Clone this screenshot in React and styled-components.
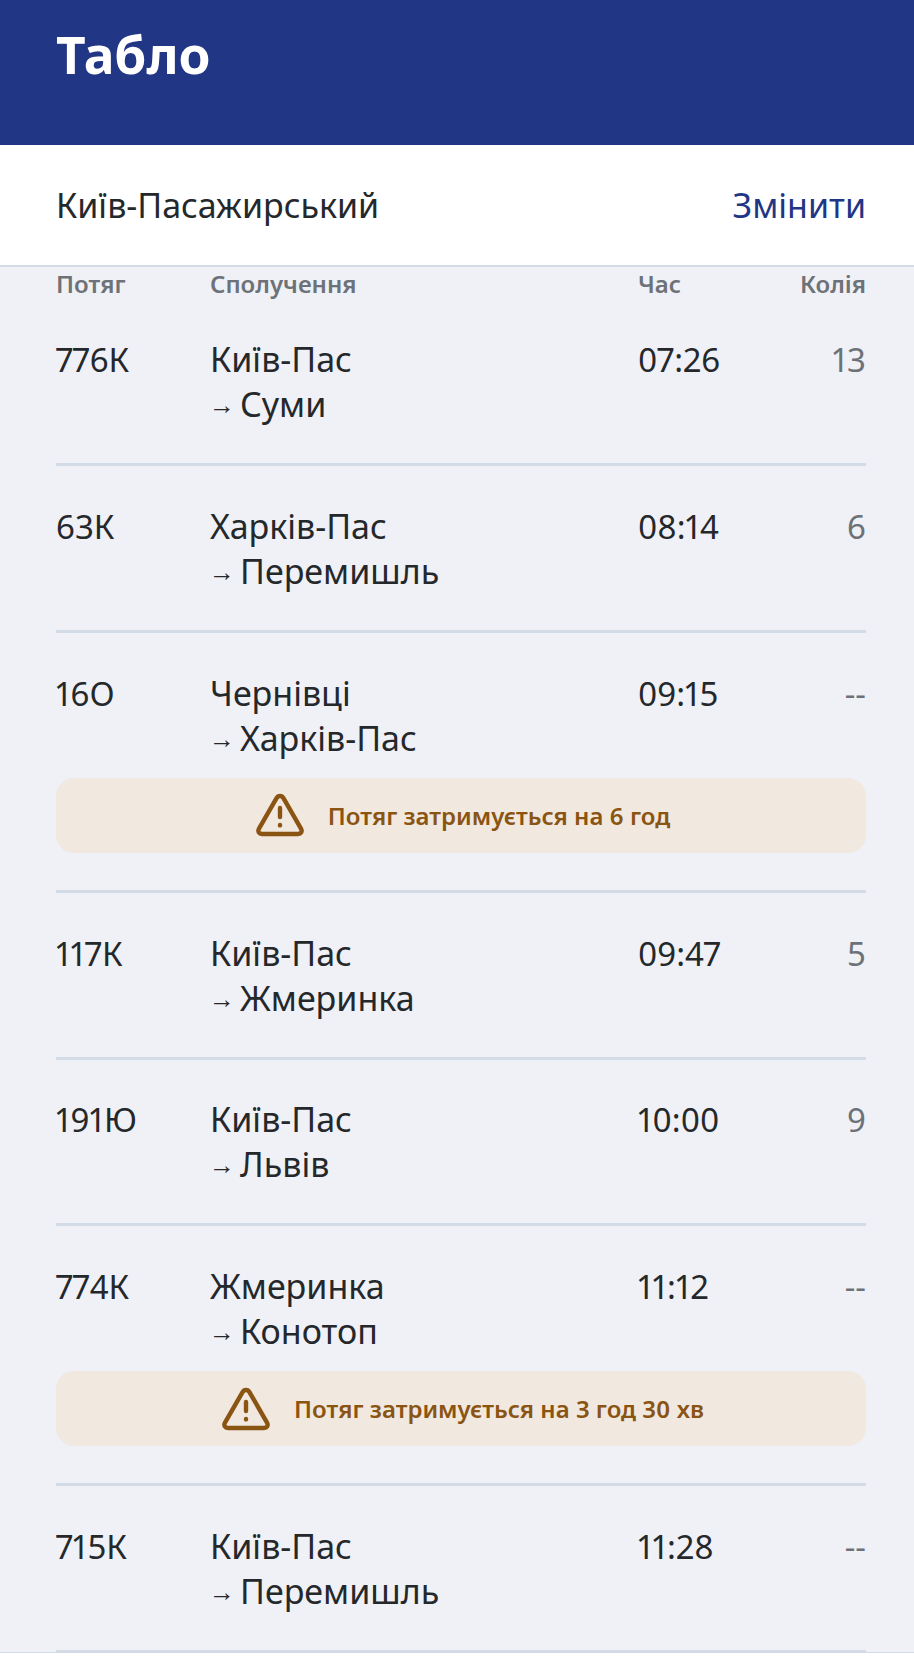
import React from "react";
import styled, { createGlobalStyle } from "styled-components";

const trains = [
  { id: "776К", from: "Київ-Пас", to: "Суми", time: "07:26", track: "13" },
  { id: "63К", from: "Харків-Пас", to: "Перемишль", time: "08:14", track: "6" },
  { id: "16О", from: "Чернівці", to: "Харків-Пас", time: "09:15", track: "--", delay: "Потяг затримується на 6 год" },
  { id: "117К", from: "Київ-Пас", to: "Жмеринка", time: "09:47", track: "5" },
  { id: "191Ю", from: "Київ-Пас", to: "Львів", time: "10:00", track: "9" },
  { id: "774К", from: "Жмеринка", to: "Конотоп", time: "11:12", track: "--", delay: "Потяг затримується на 3 год 30 хв" },
  { id: "715К", from: "Київ-Пас", to: "Перемишль", time: "11:28", track: "--" },
];

const WarningIcon = () => (
  <svg width="48" height="44" viewBox="0 0 48 44" fill="none" stroke="#8a5412" strokeWidth="4.4" strokeLinejoin="round" strokeLinecap="round">
    <path d="M24 3 C25.6 3 26.8 3.9 27.6 5.3 L45 35.6 C46.6 38.6 45 41 42 41 L6 41 C3 41 1.4 38.6 3 35.6 L20.4 5.3 C21.2 3.9 22.4 3 24 3 Z" />
    <path d="M24 15 L24 24" />
    <path d="M24 32 L24 32.4" />
  </svg>
);

const App = () => (
  <>
    <GlobalStyle />
    <Page>
      <TopBar>
        <Title>Табло</Title>
      </TopBar>
      <StationBar>
        <Station>Київ-Пасажирський</Station>
        <ChangeLink>Змінити</ChangeLink>
      </StationBar>
      <Board>
        <HeadRow>
          <span>Потяг</span>
          <span>Сполучення</span>
          <span>Час</span>
          <TrackHead>Колія</TrackHead>
        </HeadRow>
        {trains.map((t) => (
          <TrainRow key={t.id}>
            <Cells>
              <span>{t.id}</span>
              <Route>
                <div>{t.from}</div>
                <div>
                  <Arrow>→</Arrow>
                  {t.to}
                </div>
              </Route>
              <span>{t.time}</span>
              <Track>{t.track}</Track>
            </Cells>
            {t.delay && (
              <Delay>
                <WarningIcon />
                <DelayText>{t.delay}</DelayText>
              </Delay>
            )}
          </TrainRow>
        ))}
      </Board>
    </Page>
  </>
);

const GlobalStyle = createGlobalStyle`
  html, body {
    margin: 0;
    padding: 0;
    background: #ffffff;
  }
  body {
    font-family: "Noto Sans", "Open Sans", sans-serif;
    font-variant-numeric: proportional-nums;
    color: #25282b;
  }
`;

const Page = styled.div`
  width: 914px;
  height: 1669px;
  overflow: hidden;
  background: #ffffff;
`;

const TopBar = styled.header`
  height: 145px;
  box-sizing: border-box;
  padding: 19px 48px 0 56px;
  background: #213685;
`;

const Title = styled.h1`
  margin: 0;
  font-size: 51.5px;
  line-height: 70px;
  font-weight: 700;
  color: #ffffff;
`;

const StationBar = styled.div`
  height: 122px;
  box-sizing: border-box;
  padding: 0 48px 0 56px;
  display: flex;
  align-items: center;
  justify-content: space-between;
  border-bottom: 2px solid #d3dce6;
  font-size: 34px;
`;

const Station = styled.span`
  color: #25282b;
`;

const ChangeLink = styled.a`
  color: #213685;
`;

const Board = styled.main`
  height: 1386px;
  box-sizing: border-box;
  padding: 0 48px 0 56px;
  background: #eff1f6;
  border-bottom: 1px solid #d3dce6;
  overflow: hidden;
`;

const columns = "154px 428px 1fr 90px";

const HeadRow = styled.div`
  display: grid;
  grid-template-columns: ${columns};
  height: 32.7px;
  box-sizing: border-box;
  padding-top: 4px;
  font-size: 24px;
  line-height: 26px;
  font-weight: 600;
  color: #6d7278;
`;

const TrackHead = styled.span`
  text-align: right;
`;

const TrainRow = styled.section`
  padding: 37.8px 0 35.87px;
  border-bottom: 3px solid #d3dce6;
`;

const Cells = styled.div`
  display: grid;
  grid-template-columns: ${columns};
  font-size: 33px;
  line-height: 45px;
  color: #25282b;
`;

const Route = styled.div`
  font-size: 34px;
`;

const Arrow = styled.span`
  display: inline-block;
  width: 30px;
  font-family: "Liberation Sans", sans-serif;
  font-size: 26px;
  line-height: 1;
  vertical-align: 3px;
  text-indent: -1px;
`;

const Track = styled.span`
  text-align: right;
  color: #6d7278;
`;

const Delay = styled.div`
  margin: 17px 0 1.33px;
  height: 75px;
  box-sizing: border-box;
  padding-left: 4px;
  border-radius: 18px;
  background: #f1e8df;
  display: flex;
  align-items: center;
  justify-content: center;
  gap: 24px;
`;

const DelayText = styled.span`
  font-size: 24px;
  font-weight: 600;
  color: #8a5412;
`;

export default App;
